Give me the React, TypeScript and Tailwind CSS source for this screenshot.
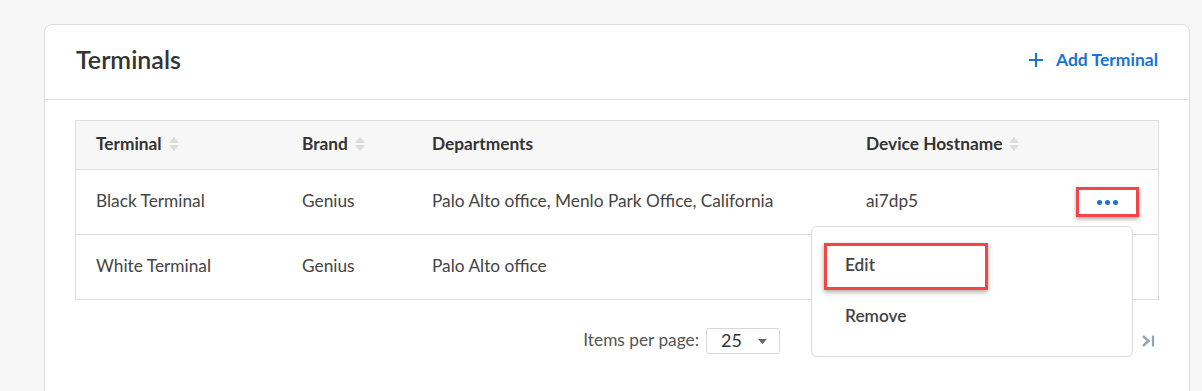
import React from "react";

const SortIcon = () => (
  <svg width="12" height="18" viewBox="0 0 12 18" className="ml-[6px] inline-block">
    <path d="M1 8 L6 2 L11 8 Z" fill="#dcdcdc" />
    <path d="M1 10 L6 16 L11 10 Z" fill="#dcdcdc" />
  </svg>
);

export default function App() {
  const font = { fontFamily: "Lato, 'Open Sans', sans-serif" };
  return (
    <div className="w-[1202px] h-[391px] overflow-hidden bg-[#f6f6f6] pt-[24px] pl-[44px]" style={font}>
      <div className="relative w-[1146px] h-[420px] bg-white border border-[#dedede] rounded-[8px]">
        <div className="h-[75px] flex items-center justify-between px-[31px] border-b border-[#dedede]">
          <div className="text-[25px] font-semibold text-[#333] mt-[-4px]">Terminals</div>
          <div className="flex items-center gap-[13px] text-[#1a73d0] text-[17.5px] font-bold mt-[-4px]">
            <svg width="14" height="14" viewBox="0 0 14 14">
              <path d="M7 0 V14 M0 7 H14" stroke="#1a73d0" strokeWidth="2" />
            </svg>
            <span>Add Terminal</span>
          </div>
        </div>
        <div className="px-[30px] pt-[20px]">
          <div className="border border-[#dedede] text-[17.3px] text-[#444]">
            <div className="grid grid-cols-[206px_130px_434px_1fr] h-[49px] items-center bg-[#f7f7f7] border-b border-[#dedede] font-bold text-[#333]">
              <div className="pl-[20px] flex items-center mt-[-2px]">Terminal<SortIcon /></div>
              <div className="pl-[20px] flex items-center mt-[-2px]">Brand<SortIcon /></div>
              <div className="pl-[20px] mt-[-2px]">Departments</div>
              <div className="pl-[20px] flex items-center mt-[-2px]">Device Hostname<SortIcon /></div>
            </div>
            <div className="grid grid-cols-[206px_130px_434px_1fr] h-[65px] items-center border-b border-[#dedede]">
              <div className="pl-[20px] mt-[-2px]">Black Terminal</div>
              <div className="pl-[20px] mt-[-2px]">Genius</div>
              <div className="pl-[20px] mt-[-2px]">Palo Alto office, Menlo Park Office, California</div>
              <div className="pl-[20px] flex items-center justify-between pr-[19px]">
                <span className="mt-[-2px]">ai7dp5</span>
                <div className="w-[63px] h-[30px] border-[3px] border-[#f24545] shadow-[0_2px_4px_rgba(0,0,0,0.35)] flex items-center justify-center gap-[3px]">
                  <span className="w-[5px] h-[5px] rounded-full bg-[#1a73d0]" />
                  <span className="w-[5px] h-[5px] rounded-full bg-[#1a73d0]" />
                  <span className="w-[5px] h-[5px] rounded-full bg-[#1a73d0]" />
                </div>
              </div>
            </div>
            <div className="grid grid-cols-[206px_130px_434px_1fr] h-[64px] items-center">
              <div className="pl-[20px] mt-[-2px]">White Terminal</div>
              <div className="pl-[20px] mt-[-2px]">Genius</div>
              <div className="pl-[20px] mt-[-2px]">Palo Alto office</div>
              <div className="pl-[20px]"></div>
            </div>
          </div>
          <div className="flex items-center justify-end h-[86px] pb-[4px] text-[17.3px] text-[#555]">
            <span className="mt-[-2px]">Items per page:</span>
            <div className="ml-[7px] w-[74px] h-[26px] border border-[#d8d8d8] rounded-[3px] flex items-center justify-between pl-[14px] pr-[12px] text-[#333] text-[18px]">
              <span className="mt-[-2px]">25</span>
              <svg width="9" height="5" viewBox="0 0 9 5"><path d="M0 0 H9 L4.5 5 Z" fill="#666" /></svg>
            </div>
            <div className="ml-[361px] mr-[4px]">
              <svg width="14" height="14" viewBox="0 0 14 14">
                <path d="M2 2 L7.5 7 L2 12" stroke="#98a4b4" strokeWidth="2.4" fill="none" />
                <path d="M12 1.5 V12.5" stroke="#98a4b4" strokeWidth="2.2" />
              </svg>
            </div>
          </div>
        </div>
        <div className="absolute left-[766px] top-[201px] w-[322px] h-[131px] bg-white border border-[#dcdcdc] rounded-[6px] text-[17.3px] font-semibold text-[#444]">
          <div className="absolute left-[12px] top-[16px] w-[164px] h-[47px] border-[3px] border-[#f24545] shadow-[0_2px_5px_rgba(0,0,0,0.35)]" />
          <div className="absolute left-[33px] top-[25px]">Edit</div>
          <div className="absolute left-[33px] top-[76px]">Remove</div>
        </div>
      </div>
    </div>
  );
}
